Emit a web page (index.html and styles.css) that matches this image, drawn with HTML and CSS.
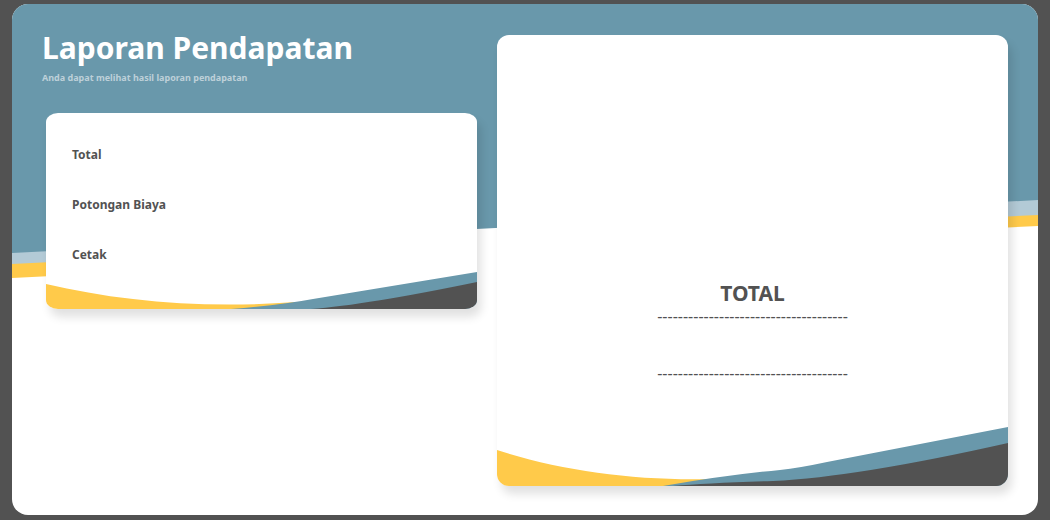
FILE: index.html
```html
<!DOCTYPE html>
<html lang="id">
<head>
<meta charset="utf-8">
<title>Laporan Pendapatan</title>
<link rel="stylesheet" href="styles.css">
</head>
<body>
<main class="panel">
  <svg class="backdrop" viewBox="0 0 1026 275" preserveAspectRatio="none" aria-hidden="true">
    <path fill="#ffca4a" d="M0 250H240V262L0 274ZM740 200H1026V222L740 236Z"/>
    <path fill="#b3cad6" d="M0 240H240V248L0 260ZM740 190H1026V211L740 225Z"/>
    <path fill="#6998ab" d="M0 0H1026V196L0 249Z"/>
  </svg>
  <section class="report">
    <h1 class="title">Laporan Pendapatan</h1>
    <p class="subtitle">Anda dapat melihat hasil laporan pendapatan</p>
    <div class="card summary">
      <dl class="rows">
        <dt>Total</dt>
        <dt>Potongan Biaya</dt>
        <dt>Cetak</dt>
      </dl>
      <svg class="wave" viewBox="0 0 431 38" preserveAspectRatio="none" aria-hidden="true">
        <path fill="#ffca4a" d="M0 13C72 30 158 38 250 31V38H0Z"/>
        <path fill="#6998ab" d="M185 38Q235 34 267 28L431 1V38Z"/>
        <path fill="#525252" d="M265 38Q320 34 431 11V38Z"/>
      </svg>
    </div>
  </section>
  <section class="card receipt">
    <div class="total">
      <h2 class="total-title">TOTAL</h2>
      <p class="rule">-------------------------------------</p>
      <p class="rule">-------------------------------------</p>
    </div>
    <svg class="wave" viewBox="0 0 511 60" preserveAspectRatio="none" aria-hidden="true">
      <path fill="#ffca4a" d="M0 24C64 45 140 55 215 53V60H0Z"/>
      <path fill="#6998ab" d="M166 60Q230 49 283 44Q302 42 330 36L511 1V60Z"/>
      <path fill="#525252" d="M176 60Q210 57 276 55Q360 51 511 17V60Z"/>
    </svg>
  </section>
</main>
</body>
</html>
```
FILE: styles.css
```css
* {
  box-sizing: border-box;
  margin: 0;
  padding: 0;
}

body {
  min-height: 100vh;
  padding: 4px 12px 5px;
  display: flex;
  background: #525252;
  color: #525252;
  font-family: "Noto Sans", "Open Sans", sans-serif;
}

.panel {
  position: relative;
  flex: 1;
  display: grid;
  grid-template-columns: 451fr 511fr;
  gap: 4px;
  padding: 31px 30px 29px;
  border-radius: 16px;
  background: #fff;
  overflow: hidden;
}

.backdrop {
  position: absolute;
  top: 0;
  left: 0;
  width: 100%;
  height: 275px;
}

.report {
  position: relative;
}

.title {
  color: #fff;
  font-size: 30px;
  line-height: 26px;
}

.subtitle {
  margin-top: 10px;
  color: #bdd0d9;
  font-size: 9px;
  font-weight: 700;
  line-height: 14px;
}

.card {
  position: relative;
  display: flex;
  flex-direction: column;
  border-radius: 12px;
  background: #fff;
  box-shadow: 4px 8px 10px rgba(0, 0, 0, 0.12);
}

.summary {
  margin: 28px 16px 0 4px;
  border-radius: 12px / 9px;
}

.rows {
  display: grid;
  gap: 30px;
  padding: 32px 26px 6px;
}

.rows dt {
  font-size: 12px;
  font-weight: 700;
  line-height: 20px;
}

.wave {
  display: block;
  width: 100%;
  height: 38px;
  border-radius: 0 0 12px 12px / 0 0 9px 9px;
}

.receipt .wave {
  height: 60px;
  border-radius: 0 0 12px 12px;
}

.total {
  flex: 1;
  padding-top: 244px;
  text-align: center;
}

.total-title {
  font-size: 21px;
  line-height: 28px;
}

.rule {
  margin-bottom: 39px;
  font-size: 16px;
  line-height: 18px;
}
```
